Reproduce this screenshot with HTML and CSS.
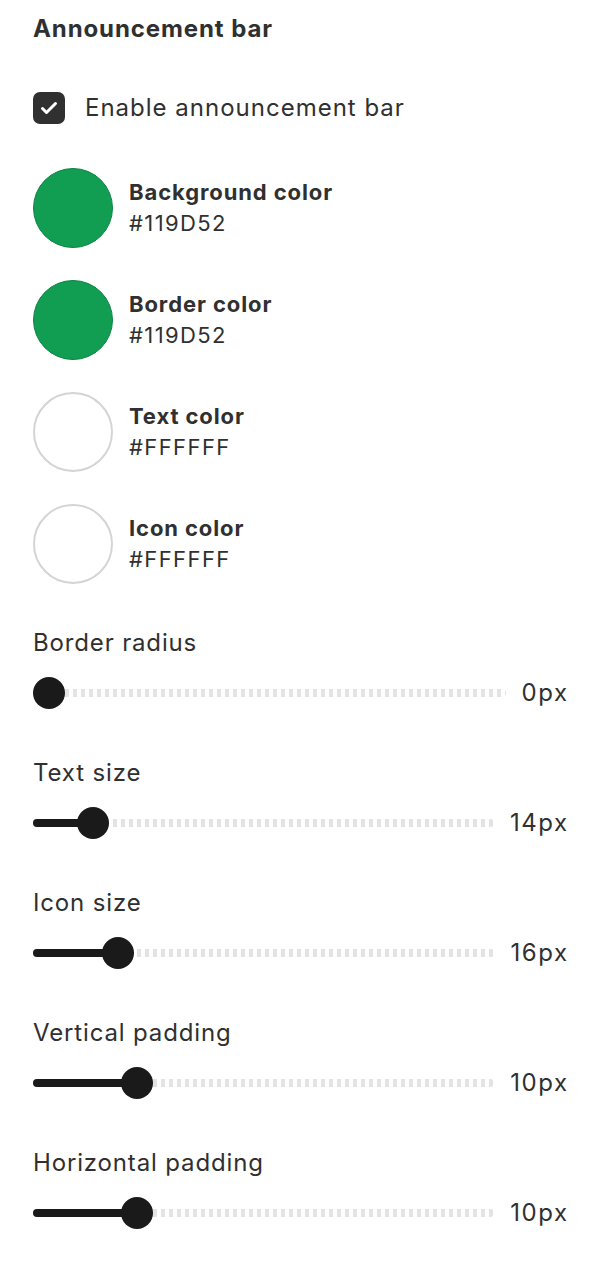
FILE: index.html
```html
<!DOCTYPE html>
<html lang="en">
<head>
<meta charset="utf-8">
<title>Announcement bar settings</title>
<link rel="stylesheet" href="styles.css">
</head>
<body>
<section class="panel">
  <h2 class="panel-title">Announcement bar</h2>

  <label class="check-row">
    <span class="checkbox">
      <svg viewBox="0 0 32 32" width="32" height="32" aria-hidden="true"><path d="M9.5 16.5l4 4 9-9" fill="none" stroke="#fff" stroke-width="3" stroke-linecap="round" stroke-linejoin="round"/></svg>
    </span>
    <span class="check-label">Enable announcement bar</span>
  </label>

  <div class="swatches">
    <div class="swatch-row">
      <span class="swatch swatch-green"></span>
      <div class="swatch-text">
        <div class="swatch-name">Background color</div>
        <div class="swatch-hex">#119D52</div>
      </div>
    </div>
    <div class="swatch-row">
      <span class="swatch swatch-green"></span>
      <div class="swatch-text">
        <div class="swatch-name">Border color</div>
        <div class="swatch-hex">#119D52</div>
      </div>
    </div>
    <div class="swatch-row">
      <span class="swatch swatch-white"></span>
      <div class="swatch-text">
        <div class="swatch-name">Text color</div>
        <div class="swatch-hex">#FFFFFF</div>
      </div>
    </div>
    <div class="swatch-row">
      <span class="swatch swatch-white"></span>
      <div class="swatch-text">
        <div class="swatch-name">Icon color</div>
        <div class="swatch-hex">#FFFFFF</div>
      </div>
    </div>
  </div>

  <div class="sliders">
    <div class="slider">
      <div class="slider-label">Border radius</div>
      <div class="slider-row">
        <div class="track">
          <div class="fill" style="width: 0px"></div>
          <span class="knob" style="left: 0px"></span>
        </div>
        <span class="slider-value">0px</span>
      </div>
    </div>
    <div class="slider">
      <div class="slider-label">Text size</div>
      <div class="slider-row">
        <div class="track">
          <div class="fill" style="width: 60px"></div>
          <span class="knob" style="left: 44px"></span>
        </div>
        <span class="slider-value">14px</span>
      </div>
    </div>
    <div class="slider">
      <div class="slider-label">Icon size</div>
      <div class="slider-row">
        <div class="track">
          <div class="fill" style="width: 85px"></div>
          <span class="knob" style="left: 69px"></span>
        </div>
        <span class="slider-value">16px</span>
      </div>
    </div>
    <div class="slider">
      <div class="slider-label">Vertical padding</div>
      <div class="slider-row">
        <div class="track">
          <div class="fill" style="width: 104px"></div>
          <span class="knob" style="left: 88px"></span>
        </div>
        <span class="slider-value">10px</span>
      </div>
    </div>
    <div class="slider">
      <div class="slider-label">Horizontal padding</div>
      <div class="slider-row">
        <div class="track">
          <div class="fill" style="width: 104px"></div>
          <span class="knob" style="left: 88px"></span>
        </div>
        <span class="slider-value">10px</span>
      </div>
    </div>
  </div>
</section>
</body>
</html>
```

FILE: styles.css
```css
html, body {
  margin: 0;
  padding: 0;
  background: #ffffff;
}

body {
  font-family: Inter, "Noto Sans", "Liberation Sans", sans-serif;
  color: #303030;
}

.panel {
  padding: 13px 33px 24px;
}

.panel-title {
  margin: 0;
  font-size: 24px;
  line-height: 32px;
  font-weight: 700;
  letter-spacing: 0.9px;
}

/* checkbox */
.check-row {
  display: flex;
  align-items: center;
  gap: 20px;
  margin-top: 47px;
}

.checkbox {
  width: 32px;
  height: 32px;
  border-radius: 7px;
  background: #303030;
  display: flex;
  align-items: center;
  justify-content: center;
  flex: none;
}

.check-label {
  font-size: 24px;
  line-height: 32px;
  letter-spacing: 1px;
}

/* colour swatches */
.swatches {
  margin-top: 44px;
  display: flex;
  flex-direction: column;
  gap: 32px;
}

.swatch-row {
  display: flex;
  align-items: center;
  gap: 16px;
}

.swatch {
  width: 80px;
  height: 80px;
  border-radius: 50%;
  box-sizing: border-box;
  flex: none;
}

.swatch-green {
  background: #119d52;
  border: 1.5px solid #0c8444;
}

.swatch-white {
  background: #ffffff;
  border: 2px solid #d4d4d4;
}

.swatch-text {
  display: flex;
  flex-direction: column;
}

.swatch-name {
  font-size: 22px;
  line-height: 31px;
  font-weight: 700;
  letter-spacing: 0.9px;
}

.swatch-hex {
  font-size: 22px;
  line-height: 31px;
  letter-spacing: 1.4px;
}

/* range sliders */
.sliders {
  margin-top: 43px;
  display: flex;
  flex-direction: column;
  gap: 48px;
}

.slider-label {
  font-size: 24px;
  line-height: 32px;
  letter-spacing: 0.85px;
}

.slider-row {
  margin-top: 18px;
  display: flex;
  align-items: center;
  gap: 16px;
  height: 32px;
}

.track {
  position: relative;
  flex: 1;
  height: 8px;
  border-radius: 4px;
  background: repeating-linear-gradient(90deg, #e3e3e3 0 4px, transparent 4px 8px);
}

.fill {
  height: 8px;
  border-radius: 4px;
  background: #1a1a1a;
}

.knob {
  position: absolute;
  top: -12px;
  width: 32px;
  height: 32px;
  border-radius: 50%;
  background: #1a1a1a;
}

/* trailing letter-spacing is pulled back so the digits sit flush right */
.slider-value {
  font-size: 24px;
  line-height: 32px;
  letter-spacing: 1.5px;
  margin-right: -1.5px;
  flex: none;
}
```
